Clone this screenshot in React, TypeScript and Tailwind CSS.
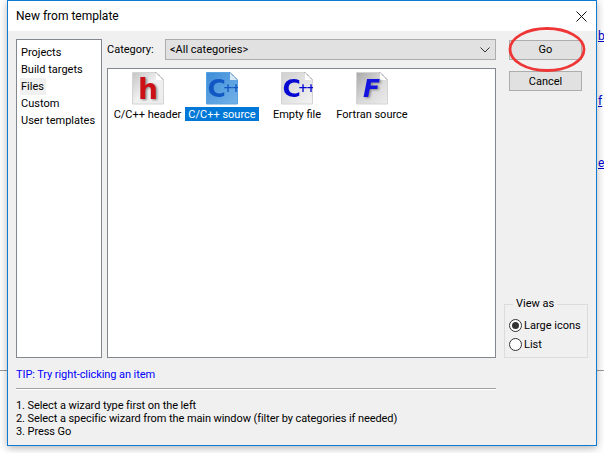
const font = { fontFamily: 'Roboto, "Noto Sans", sans-serif' };

function FileIcon({ letter, color, size, x, y, italic, dark }: { letter: string; color: string; size: number; x: number; y: number; italic?: boolean; dark?: boolean }) {
  const id = letter;
  return (
    <svg width="32" height="33" viewBox="0 0 32 33" className="block">
      <defs>
        <linearGradient id={`g${id}`} x1="0" y1="0" x2="1" y2="1">
          <stop offset="0" stopColor={dark ? '#a8a8a8' : '#c4c4c4'} />
          <stop offset="0.5" stopColor={dark ? '#d8d8d8' : '#f0f0f0'} />
          <stop offset="1" stopColor="#ececec" />
        </linearGradient>
      </defs>
      <path d="M0.5 0.5H24L31.5 8V32H0.5Z" fill={`url(#g${id})`} stroke="#d4d4d4" />
      <path d="M24 0.5V8H31.5Z" fill="#ffffff" />
      <path d="M24 0.5L31.5 8" stroke="#444444" strokeWidth="0.8" strokeDasharray="1 1" />
      <text x={x + 1.5} y={y + 1} fontSize={size} fontWeight="900" fontStyle={italic ? 'italic' : 'normal'} fontFamily='"DejaVu Sans", sans-serif' fill="#8a8a8a" style={{ filter: 'blur(0.9px)' }}>{letter}</text>
      <text x={x} y={y} fontSize={size} fontWeight="900" fontStyle={italic ? 'italic' : 'normal'} fontFamily='"DejaVu Sans", sans-serif' fill={color} style={{ filter: 'blur(0.5px)' }}>{letter}</text>
    </svg>
  );
}

function CppIcon({ selected }: { selected?: boolean }) {
  const id = selected ? 'cs' : 'cn';
  const ink = selected ? '#1258c4' : '#0606d2';
  return (
    <svg width="32" height="33" viewBox="0 0 32 33" className="block">
      <defs>
        <linearGradient id={`g${id}`} x1="0" y1="0" x2="1" y2="1">
          <stop offset="0" stopColor={selected ? '#3d8dd8' : '#d0d0d0'} />
          <stop offset="1" stopColor={selected ? '#74b2e8' : '#f4f4f4'} />
        </linearGradient>
      </defs>
      <path d="M0.5 0.5H24L31.5 8V32H0.5Z" fill={`url(#g${id})`} stroke={selected ? '#5ba3e0' : '#d4d4d4'} />
      <path d="M24 0.5V8H31.5Z" fill={selected ? '#d5e8f8' : '#ffffff'} />
      <path d="M24 0.5L31.5 8" stroke={selected ? '#2a5a90' : '#444444'} strokeWidth="0.8" strokeDasharray="1 1" />
      <text x="1.5" y="25" fontSize="25" fontWeight="900" fontFamily='"DejaVu Sans", sans-serif' fill={ink} style={{ filter: 'blur(0.45px)' }}>C</text>
      <text x="17" y="20" fontSize="12" fontWeight="900" fontFamily='"DejaVu Sans", sans-serif' letterSpacing="-2" fill={ink} style={{ filter: 'blur(0.4px)' }}>++</text>
    </svg>
  );
}

function Radio({ checked, label }: { checked?: boolean; label: string }) {
  return (
    <div className="flex items-center h-[13px] gap-[2px]">
      <span className="flex items-center justify-center w-[13px] h-[13px] rounded-full border border-[#333333] bg-white">
        {checked && <span className="w-[7px] h-[7px] rounded-full bg-[#333333]" />}
      </span>
      <span className="text-[11px] leading-none text-black">{label}</span>
    </div>
  );
}

export default function App() {
  const categories = ['Projects', 'Build targets', 'Files', 'Custom', 'User templates'];

  return (
    <div className="relative flex w-[604px] h-[453px] bg-white overflow-hidden text-[11px] text-black" style={font}>
      <div className="w-[7px] shrink-0 pt-[370px]">
        <div className="h-px bg-[#9a9a9a]" />
      </div>

      <div className="relative z-10 flex flex-col w-[590px] h-[446px] shrink-0 border border-[#0f7bd0] bg-[#f0f0f0] shadow-[0_2px_8px_rgba(0,0,0,0.3)]">
        <div className="flex items-center justify-between h-[30px] bg-white pl-[8px] pr-[9px] shrink-0">
          <span className="text-[12px]">New from template</span>
          <svg width="11" height="11" viewBox="0 0 11 11">
            <path d="M0.5 0.5L10.5 10.5M10.5 0.5L0.5 10.5" stroke="#111111" strokeWidth="1" fill="none" />
          </svg>
        </div>

        <div className="flex pl-[8px] pt-[8px] h-[327px] shrink-0">
          <div className="w-[86px] h-[319px] shrink-0 border border-[#828790] bg-white pt-[4px] pl-[3px]">
            {categories.map((c) => (
              <div key={c} className="h-[17px] flex items-center">
                <span className={`px-px h-[17px] leading-[17px] whitespace-nowrap ${c === 'Files' ? 'bg-[#f0f0f0] pr-[2px]' : ''}`}>{c}</span>
              </div>
            ))}
          </div>

          <div className="flex flex-col w-[389px] ml-[5px] shrink-0">
            <div className="flex items-center h-[21px] shrink-0">
              <span className="w-[58px] pt-[2px]">Category:</span>
              <div className="flex items-center justify-between w-[331px] h-[21px] border border-[#adadad] bg-[#e1e1e1] pl-[4px] pr-[5px]">
                <span className="pt-px">&lt;All categories&gt;</span>
                <svg width="10" height="6" viewBox="0 0 10 6">
                  <path d="M0.5 0.5L5 5L9.5 0.5" stroke="#333333" fill="none" />
                </svg>
              </div>
            </div>
            <div className="mt-[8px] h-[290px] border border-[#828790] bg-white flex pl-[2px] pt-[3px]">
              <div className="w-[75px] flex flex-col items-center">
                <FileIcon letter="h" color="#cc1015" size={28} x={6} y={27} />
                <span className="mt-[2px] h-[14px] leading-[16px] whitespace-nowrap">C/C++ header</span>
              </div>
              <div className="w-[74px] flex flex-col items-center">
                <CppIcon selected />
                <span className="mt-[2px] h-[14px] leading-[16px] px-[3px] whitespace-nowrap bg-[#0078d7] text-white">C/C++ source</span>
              </div>
              <div className="w-[76px] flex flex-col items-center">
                <CppIcon />
                <span className="mt-[2px] h-[14px] leading-[16px] whitespace-nowrap">Empty file</span>
              </div>
              <div className="w-[74px] flex flex-col items-center">
                <FileIcon letter="F" color="#1414e0" size={25} x={7} y={25} italic dark />
                <span className="mt-[2px] h-[14px] leading-[16px] whitespace-nowrap">Fortran source</span>
              </div>
            </div>
          </div>

          <div className="flex flex-col w-[84px] ml-[8px] h-[319px] shrink-0">
            <div className="flex flex-col gap-[11px] pl-[5px] pt-px">
              <div className="flex items-center justify-center w-[73px] h-[20px] pt-px border border-[#adadad] bg-[#e1e1e1]">Go</div>
              <div className="flex items-center justify-center w-[73px] h-[20px] pt-[2px] border border-[#adadad] bg-[#e1e1e1]">Cancel</div>
            </div>
            <fieldset className="mt-auto h-[62px] border border-[#dcdcdc] pl-[4px] pt-[7px]">
              <legend className="ml-[4px] px-[3px] text-[11px] leading-[16px]">View as</legend>
              <div className="flex flex-col gap-[6px]">
                <Radio checked label="Large icons" />
                <Radio label="List" />
              </div>
            </fieldset>
          </div>
        </div>

        <div className="pl-[8px] pt-[9px] w-[488px] tracking-[-0.08px]">
          <div className="h-[15px] leading-[15px] text-[#0000ff]">TIP: Try right-clicking an item</div>
          <div className="mt-[6px] h-[2px] border-t border-[#a0a0a0] bg-white" />
          <div className="mt-[9px] leading-[13px] whitespace-nowrap">
            <div>1. Select a wizard type first on the left</div>
            <div>2. Select a specific wizard from the main window (filter by categories if needed)</div>
            <div>3. Press Go</div>
          </div>
        </div>
      </div>

      <div className="w-[7px] shrink-0 overflow-hidden text-[12px] leading-[14px] text-[#0000cc] underline pl-px">
        <div className="pt-[29px]">bi</div>
        <div className="pt-[51px]">f</div>
        <div className="pt-[48px]">e</div>
        <div className="mt-[200px] h-px bg-[#9a9a9a] -ml-px" />
      </div>

      <svg width="80" height="46" viewBox="0 0 80 46" className="absolute left-[508px] top-[27px] z-20">
        <ellipse cx="39" cy="22.5" rx="37" ry="21" fill="none" stroke="#ee3636" strokeWidth="2.8" />
      </svg>
    </div>
  );
}
